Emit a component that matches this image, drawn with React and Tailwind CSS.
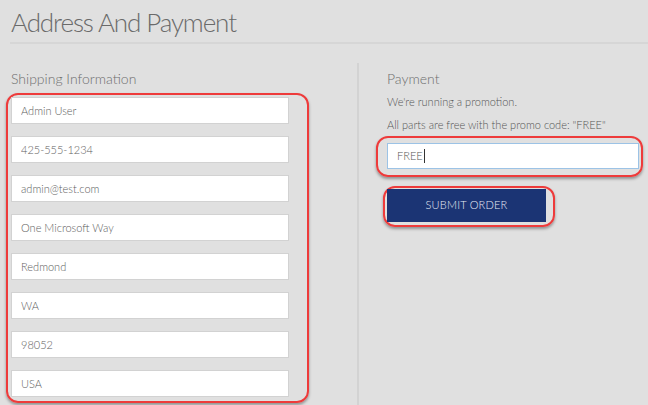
import React from 'react';

const shipping = ['Admin User', '425-555-1234', 'admin@test.com', 'One Microsoft Way', 'Redmond', 'WA', '98052', 'USA'];

const App = () => {
  return (
    <div className="w-[648px] h-[405px] overflow-hidden bg-[#e0e0e0] text-[#666] font-light font-['Lato','Open_Sans',sans-serif]">
      <div className="pl-[11px] pt-[6px] h-[42px]">
        <h1 className="text-[26px] font-light leading-[32px] tracking-[-1.1px] text-[#6a6a6a]">Address And Payment</h1>
      </div>
      <div className="ml-[10px] h-[2px] bg-[#d6d6d6]" />

      <div className="flex mt-[19px]">
        {/* Shipping column */}
        <div className="w-[357px]">
          <h2 className="pl-[11px] text-[14px] leading-[20px] text-[#6f6f6f] h-[28px] pt-[6px]">Shipping Information</h2>
          <div className="ml-[6px] mt-[2px] w-[303px] border-2 border-[#ee3b3b] rounded-[12px] pl-[3px] pt-[2px] pb-[4px] flex flex-col gap-[12px] shadow-[0_2px_3px_rgba(0,0,0,0.35)]">
            {shipping.map((v) => (
              <input
                key={v}
                readOnly
                value={v}
                className="w-[278px] h-[27px] bg-white border border-[#d2d2d2] pl-[9px] text-[11px] font-light text-[#5e5e5e] outline-none"
              />
            ))}
          </div>
        </div>

        {/* Payment column */}
        <div className="border-l-2 border-[#d3d3d3] pl-[28px] flex-1 h-[400px]">
          <h2 className="text-[14px] leading-[20px] text-[#6f6f6f] h-[28px] pt-[6px]">Payment</h2>
          <p className="text-[11px] leading-[14px] mt-[4px] text-[#555]">We're running a promotion.</p>
          <p className="text-[11px] leading-[14px] mt-[9px] text-[#555]">All parts are free with the promo code: "FREE"</p>
          <div className="-ml-[11px] mt-[4px] w-[267px] h-[41px] border-2 border-[#ee3b3b] rounded-[12px] pl-[9px] pt-[5px] shadow-[0_2px_3px_rgba(0,0,0,0.35)]">
            <div className="w-[252px] h-[26px] bg-white border border-[#9cc3e6] pl-[9px] flex items-center text-[11px] text-[#555]">
              FREE<span className="inline-block w-px h-[14px] bg-[#333] ml-[1px]" />
            </div>
          </div>
          <div className="-ml-[4px] mt-[9px] w-[172px] h-[41px] border-2 border-[#ee3b3b] rounded-[12px] pl-[2px] pt-[1px] shadow-[0_2px_3px_rgba(0,0,0,0.35)]">
            <button className="w-[159px] h-[33px] bg-[#1b3474] text-[#e8ecf4] text-[11px] font-light tracking-[0.2px]">SUBMIT ORDER</button>
          </div>
        </div>
      </div>
    </div>
  );
};

export default App;
